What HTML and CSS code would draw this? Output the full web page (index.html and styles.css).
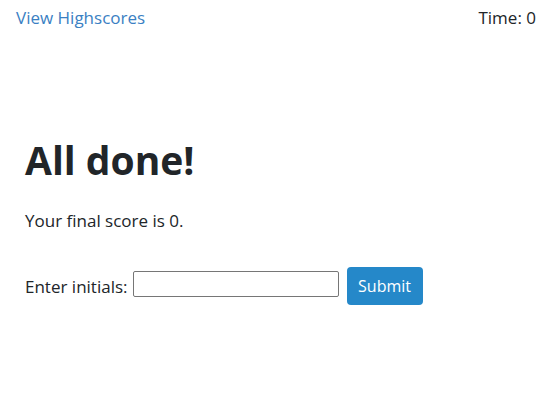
FILE: index.html
```html
<!DOCTYPE html>
<html>
<head>
<meta charset="utf-8">
<link rel="stylesheet" href="styles.css">
</head>
<body>
<header class="top">
  <a class="highscores" href="#">View Highscores</a>
  <span class="timer">Time: 0</span>
</header>
<main class="done">
  <h1 class="title">All done!</h1>
  <p class="score">Your final score is 0.</p>
  <form class="initials">
    <label class="label" for="ini">Enter initials:</label>
    <input class="field" id="ini" type="text">
    <button class="submit" type="button">Submit</button>
  </form>
</main>
</body>
</html>
```
FILE: styles.css
```css
* { box-sizing: border-box; }
body {
  margin: 0;
  font-family: "Open Sans", "Noto Sans", sans-serif;
  font-size: 17px;
  color: #212529;
  background: #fff;
}
.top {
  display: flex;
  justify-content: space-between;
  padding: 6px 18px 0 16px;
  line-height: 24px;
}
.highscores { color: #3a80c3; text-decoration: none; }
.timer { color: #212529; }
.done { padding: 106px 25px 0; }
.title {
  margin: 0;
  font-size: 39px;
  font-weight: 700;
  line-height: 48px;
}
.score { margin: 25px 0 0; line-height: 24px; }
.initials {
  display: flex;
  align-items: center;
  margin-top: 34px;
}
.label { margin-right: 5px; }
.field {
  width: 206px;
  height: 26px;
  border: 1px solid #767676;
  border-radius: 2px;
  margin: 0 8px 4px 0;
}
.submit {
  width: 76px;
  height: 38px;
  border: 0;
  border-radius: 4px;
  background: #2588c9;
  color: #fff;
  font: inherit;
  font-size: 16px;
}
```
